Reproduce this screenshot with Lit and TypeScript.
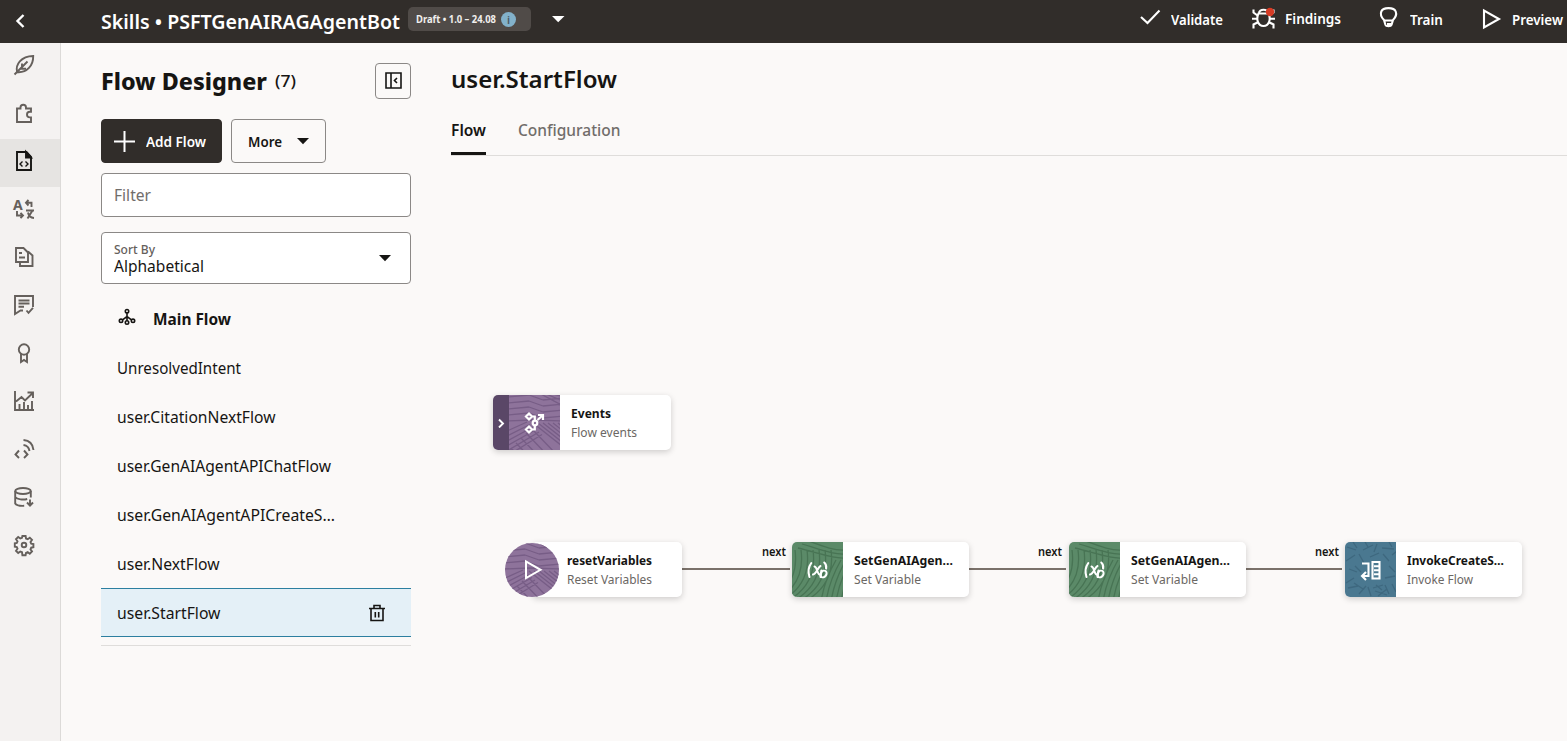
import { LitElement, html, css, svg } from "lit";
import { customElement, property } from "lit/decorators.js";
import { classMap } from "lit/directives/class-map.js";
import { styleMap } from "lit/directives/style-map.js";

/** A single line label whose glyphs are condensed or widened to a given width. */
@customElement("fit-text")
class FitText extends LitElement {
  @property({ type: Number }) w = 0;
  @property() text = "";

  static styles = css`
    :host { display: block; flex: none; white-space: nowrap; }
    .inner { display: inline-block; transform-origin: 0 50%; vertical-align: top; }
  `;

  updated() {
    const el = this.renderRoot.querySelector(".inner") as HTMLElement;
    this.style.width = this.w + "px";
    el.style.transform = "none";
    const natural = el.getBoundingClientRect().width;
    if (natural) el.style.transform = `scaleX(${this.w / natural})`;
  }

  render() {
    return html`<span class="inner">${this.text}</span>`;
  }
}

const t = (text: string, w: number, cls = "") =>
  html`<fit-text class=${cls} .text=${text} .w=${w}></fit-text>`;

/* Side navigation icons, drawn on a 20 x 20 grid */
const navIcons = [
  svg`<path d="M3.2 17.2C1 10 7 1.2 19.2 1c.2 9.5-6.2 17-16 16.2z"/><path d="M.5 19.5 13.5 6.5M8 12V8.5M6.5 13.8h5.5"/>`,
  svg`<path d="M3 5.5h3.5V4.500a2.500 2.500 0 0 1 5.500 0v1H17v3.300h-1.200a2.800 2.800 0 0 0 0 5.600H17V19H3z"/>`,
  svg`<path d="M3 1h9.500L17 5.800V19H3z"/><path d="M12 1v5.500h5z" fill="currentColor"/><path stroke-width="1.400" d="M8.500 10.500 6 13l2.500 2.500M11.500 10.500 14 13l-2.500 2.500"/>`,
  svg`<text x="-1" y="11" class="ch">A</text><path d="M14.500 1 12 3.800l2.500 2.700M12 3.800h5.500v4.200M3 12v4.500h5.500M6.500 13.800l2.500 2.700-2.500 2.700M12 11.500h8M13.500 19.500l5-8M14 13.500c.5 3 3 5.300 6 5.500"/>`,
  svg`<path d="M2 1h7.500l4.500 4.500V15H2zM5 6h3M5 10.500h6M6 15v4h12.500V8.500l-4.500-4"/>`,
  svg`<path d="M9 15.500H6.500L1 19V1h18v11M4.500 5.500h11M4.500 8.500h11M4.500 11.700h5.500M12.500 15.500l2 2.300 4.500-5"/>`,
  svg`<circle cx="10" cy="6.500" r="5.200"/><path d="M7 11v8l3-2 3 2v-8"/>`,
  svg`<path d="M1 0v19h19M5.500 19v-6M10 19v-8M14 19v-5M18 19v-9M2 10.500l5.500-4.500 3.500 3.500 7.500-7.200M13.500 1.500H19V7"/>`,
  svg`<path d="M5 11.500 1.500 15.500 5 19M10 11.500l3.500 4L10 19M9.500 6c3.500.5 5.500 2.500 6 6M9.500 1c6 .5 9.500 4.500 10 10"/>`,
  svg`<ellipse cx="9" cy="4" rx="7.800" ry="3"/><path d="M1.200 4v12.500c1 1.800 4.500 2.500 9 2.300M16.800 4v6.500M1.200 10.200c2 2.300 8 2.900 12 1.800M16 12.500v6M13 15.500l3 3.200 3-3.200"/>`,
  svg`<circle cx="10" cy="10" r="2.300"/><path d="M8.400 1h3.200l.4 2.500 1.700.7 2.100-1.500 2.200 2.200-1.500 2.100.7 1.700 2.200.4v3.200l-2.200.4-.7 1.700 1.500 2.100-2.200 2.200-2.100-1.500-1.700.7-.4 2.300H8.400L8 17.200l-1.700-.7L4.200 18 2 15.800l1.500-2.100-.7-1.700L.8 11.600V8.400L2.800 8l.7-1.700L2 4.200 4.200 2l2.100 1.500L8 2.800z"/>`,
];

const line = (x1: number, y1: number, x2: number, y2: number) => `M${x1} ${y1}L${x2} ${y2}`;

/* Bands of parallel strokes filling the purple tile */
const purpleTexture = [
  ...[-14, -8, -2, 4].map((o) => line(-2, 16 + o, 20, 14 + o) + line(20, 14 + o, 34, 19 + o) + line(34, 19 + o, 56, 17 + o)),
  line(-2, 26, 24, 25) + line(24, 25, 56, 26),
  ...[0, 5, 10, 15, 20, 25].map((o) => line(-2, 36 + o, 18 + o * 0.6, 27 + o * 0.5)),
  ...[0, 5, 10, 15, 20, 25, 30].map((o) => line(24 + o, 28, 62 + o, 58)),
  ...[0, 5, 10, 15, 20].map((o) => line(22 - o, 33 + o, 50 - o, 62 + o)),
  ...[0, 5, 10].map((o) => line(30 + o, -2, 56, 12 - o)),
].join("");

/* Sweeping curves of the green tile */
const greenTexture = [
  ...[-36, -30, -24, -18, -12, -6, 0, 6, 12].map((o) => `M${o} 60C${o + 22} 48 ${o + 30} 30 ${o + 27} 8`),
  ...[0, 4, 8].map((o) => `M${14 - o} ${-2 + o}C30 ${4 + o} 42 ${9 + o} 56 ${8 + o}`),
  ...[0, 5, 10, 15, 20].map((o) => `M${29 + o} 60C${31 + o} 46 ${36 + o} 32 ${44 + o} 18`),
].join("");

/* Scattered dashes of the blue tile */
const blueTexture = "M2 5l9 3M8 0l4 6M18 8l10-5M32 2l-3 8M37 6l12 1M44 0l3 5M1 19l9-6M14 12l5 9M25 15l9-4M38 12l6 7M47 13l5-4M4 27l8 3M9 36l-8 5M16 30l-6-6M3 46l10-2M14 52l7-8M9 41l9 6M26 54l-3-9M28 46l10-3M33 54l9-7M44 52l-4-9M40 36l10-2M47 42l4 8M44 24l6 6M37 48l-6-5M20 0l3 5M30 49l12 4";

@customElement("flow-node")
class FlowNode extends LitElement {
  @property() kind = "set";
  @property() name = "";
  @property() type = "";
  @property({ type: Number }) nw = 98;
  @property({ type: Number }) tw = 66;

  static styles = css`
    :host { display: flex; height: 55px; border-radius: 5px; background: #fff; box-shadow: 0 2px 6px rgba(0, 0, 0, .18); }
    .handle { width: 16px; background: #5a4767; border-radius: 5px 0 0 5px; display: grid; place-items: center; flex: none; }
    .tile { width: 51px; height: 55px; flex: none; overflow: hidden; border-radius: 5px 0 0 5px; }
    .events .tile { border-radius: 0; }
    .reset .tile { width: 54px; height: 54px; margin: 1px 0 0 -27px; border-radius: 50%; }
    .wrap { display: flex; flex: 1; }
    svg { display: block; }
    .labels { padding: 9px 0 0 11px; }
    .reset .labels { padding-left: 7.5px; }
    .name { font-size: 12.5px; font-weight: 700; line-height: 19px; color: #161513; }
    .type { font-size: 12px; line-height: 19px; color: #6b6764; }
  `;

  private glyph() {
    switch (this.kind) {
      case "events":
        return svg`<g fill="none" stroke="#fff" stroke-width="2.200"><path d="M20 18.500l3 3-3 3-3-3zM20 31.500l3 3-3 3-3-3zM23 21.500h2.800v4.500M23 34.500h2.800v-4.500"/><circle cx="26" cy="28" r="2.300"/><path d="M28.500 25l5-4.500M29 20h5v5"/></g>`;
      case "reset":
        return svg`<path d="M21 18.500v16.500l14.500-8.200z" fill="none" stroke="#fff" stroke-width="2"/>`;
      case "invoke":
        return svg`<g fill="none" stroke="#fff" stroke-width="2.100"><path d="M17 21.500h6.500V34h-5.500M21 30l-4 4 4 4"/><path d="M27.500 20h7v16.500h-7zM29 24.200h4.500M29 28.200h4.500M29 32.200h4.500"/></g>`;
      default:
        return svg`<g fill="none" stroke="#fff" stroke-linecap="round"><path stroke-width="2.100" d="M19.300 21c-3.300 4.500-3.300 9.500-1.800 14M32.300 20.500c1.700 1.500 2.200 3.500 1.800 6"/><path stroke-width="2" d="M22.500 24.500c3 .5 2.500 7.500 5 8M28.500 24c-2.500 1-4 8-7.500 8.500"/><ellipse cx="31.500" cy="32" rx="2.800" ry="3.600" transform="rotate(35 31.500 32)" stroke-width="2"/><path stroke-width="2" d="M29.500 28.500l-1 6.500"/></g>`;
    }
  }

  render() {
    const [bg, ink, tex] =
      this.kind === "set" ? ["#5b8a68", "#487454", greenTexture]
      : this.kind === "invoke" ? ["#4a7890", "#3e687f", blueTexture]
      : ["#8e739b", "#775d86", purpleTexture];
    const w = this.kind === "reset" ? 54 : 51;
    return html`<div class="wrap ${this.kind}">
      ${this.kind === "events"
        ? html`<div class="handle"><svg width="8" height="10" fill="none" stroke="#fff" stroke-width="1.900"><path d="M2 1.500l4 4-4 4"/></svg></div>`
        : ""}
      <div class="tile"><svg width=${w} height="55">
        <rect width=${w} height="55" fill=${bg}></rect>
        <path d=${tex} fill="none" stroke=${ink} stroke-width="1.300"></path>
        ${this.glyph()}
      </svg></div>
      <div class="labels">${t(this.name, this.nw, "name")}${t(this.type, this.tw, "type")}</div>
    </div>`;
  }
}

const flows: [string, number][] = [
  ["UnresolvedIntent", 124], ["user.CitationNextFlow", 158.5], ["user.GenAIAgentAPIChatFlow", 214],
  ["user.GenAIAgentAPICreateS…", 218], ["user.NextFlow", 102.5], ["user.StartFlow", 103.5],
];

const nodes = [
  { kind: "events", name: "Events", type: "Flow events", x: 493, y: 395, w: 178, nw: 40, tw: 66 },
  { kind: "reset", name: "resetVariables", type: "Reset Variables", x: 532, y: 542, w: 150, nw: 85, tw: 85 },
  { kind: "set", name: "SetGenAIAgen…", type: "Set Variable", x: 792, y: 542, w: 177, nw: 99, tw: 67 },
  { kind: "set", name: "SetGenAIAgen…", type: "Set Variable", x: 1068.5, y: 542, w: 177, nw: 99, tw: 67 },
  { kind: "invoke", name: "InvokeCreateS…", type: "Invoke Flow", x: 1345, y: 542, w: 177, nw: 97, tw: 66 },
];

const links = [{ x: 682, w: 108, label: 762 }, { x: 969, w: 97, label: 1038 }, { x: 1246, w: 96, label: 1314.5 }];

@customElement("app-root")
class AppRoot extends LitElement {
  static styles = css`
    :host { display: block; height: 741px; overflow: hidden; font-family: "Noto Sans", "Open Sans", sans-serif; color: #161513; background: #fbf9f8; }
    * { box-sizing: border-box; }
    svg { display: block; flex: none; fill: none; stroke: currentColor; stroke-width: 1.8; overflow: visible; }
    .page { display: grid; grid-template: 43px 698px / 61px 350px 1fr; height: 741px; width: 1567px; }
    .top { grid-column: 1 / -1; background: #312d2a; color: #fff; display: flex; overflow: hidden; }
    .back { width: 101px; padding: 14px 0 0 15px; }
    .title { font-size: 20.5px; font-weight: 600; line-height: 43px; }
    .pill { margin: 7px 0 0 8px; width: 123px; height: 24px; border-radius: 5px; background: #504b48; display: flex; padding-left: 8px; }
    .ver { font-size: 11px; font-weight: 700; line-height: 24px; color: #f1efed; }
    .info { margin: 4.5px 0 0 5px; width: 15px; height: 15px; border-radius: 50%; background: #82b1ca; color: #4a5a64; font-size: 11px; font-weight: 600; line-height: 15px; text-align: center; }
    .caret { stroke: none; fill: currentColor; }
    .topcaret { margin: 16px 0 0 21px; }
    .actions { margin-left: auto; display: flex; }
    .act { display: flex; }
    .act .lbl { font-size: 14px; font-weight: 600; line-height: 40px; }
    .act .lbl.up { line-height: 38px; }
    .a1 { width: 112px; } .a2 { width: 127px; } .a3 { width: 102px; } .a4 { width: 86px; }
    .act svg { stroke-width: 2.1; }
    .nav { background: #f4f2f1; border-right: 1px solid #dcdad8; color: #65605c; }
    .item { height: 48px; padding: 12px 0 0 14px; }
    .item.on { background: #e6e4e2; color: #161513; }
    .item svg { stroke-width: 1.9; }
    .ch { font: 700 14px "Noto Sans", sans-serif; fill: currentColor; stroke: none; }
    .panel { padding: 20px 0 0 40px; }
    .head { display: flex; height: 36px; }
    .h1 { font-size: 23.5px; font-weight: 800; line-height: 37px; }
    .count { font-size: 16px; font-weight: 500; line-height: 37px; margin-left: 8px; }
    .fold { margin-left: auto; width: 36px; height: 36px; border: 1px solid #8b8886; border-radius: 4px; padding: 8px 0 0 8.5px; }
    .fold svg { stroke-width: 1.6; }
    .btns { display: flex; gap: 9px; margin-top: 20px; }
    .btn { height: 44px; border-radius: 4px; display: flex; font-size: 14px; font-weight: 600; line-height: 43px; border: 1px solid #8b8886; }
    .add { width: 121px; background: #312d2a; border-color: #312d2a; color: #fff; padding-left: 12px; gap: 11px; }
    .add svg { margin-top: 10.5px; stroke-width: 2; }
    .more { width: 95px; padding-left: 16px; gap: 15px; }
    .more svg { margin-top: 18px; }
    .field { width: 310px; border: 1px solid #8b8886; border-radius: 4px; background: #fff; padding-left: 12px; font-size: 16px; }
    .filter { height: 44px; margin-top: 10px; line-height: 42px; color: #716d6a; }
    .sort { height: 52px; margin-top: 15px; padding-top: 8px; display: flex; }
    .small { font-size: 12px; line-height: 17px; color: #65605c; font-weight: 500; }
    .val { line-height: 17px; }
    .sort svg { margin: 14px 19px 0 auto; }
    .list { width: 310px; margin-top: 10px; padding-bottom: 8px; border-bottom: 1px solid #dfdddb; }
    .row { height: 49px; padding: 1px 26px 0 16px; display: flex; align-items: center; font-size: 16px; line-height: 49px; }
    .row fit-text { position: relative; top: .5px; }
    .row.main { font-weight: 700; gap: 17px; }
    .row.main svg { margin-top: -4px; }
    .row.sel { background: #e4f0f7; border: 1px solid #2c7fa0; border-width: 1px 0; line-height: 47px; }
    .row.sel svg { margin-left: auto; stroke-width: 1.6; }
    .work { padding-left: 40px; }
    .h2 { font-size: 24px; font-weight: 650; line-height: 36px; padding-top: 18px; }
    .tabs { display: flex; gap: 32px; height: 40px; margin-top: 19px; border-bottom: 1px solid #dfdddb; font-size: 16px; font-weight: 600; }
    .tab { height: 39px; line-height: 28px; color: #716d6a; font-weight: 500; }
    .tab.on { border-bottom: 3px solid #161513; color: #161513; font-weight: 600; }
    .node, .link, .next { position: absolute; }
    .link { height: 2px; top: 568px; background: #7a716a; }
    .next { top: 542px; font-size: 12px; font-weight: 600; line-height: 20px; }
  `;

  render() {
    return html`<div class="page">
      <header class="top">
        <div class="back"><svg width="10" height="14"><path stroke-width="2.400" d="M8.500 1 2.500 7l6 6"/></svg></div>
        ${t("Skills • PSFTGenAIRAGAgentBot", 299, "title")}
        <div class="pill">${t("Draft • 1.0 – 24.08", 80, "ver")}<span class="info">i</span></div>
        <svg class="caret topcaret" width="13" height="7"><path d="M0 0h12.500L6.200 6.300z"/></svg>
        <div class="actions">
          <div class="act a1"><svg width="31" height="40"><path d="M1 17l6.500 6L19.500 10.500"/></svg>${t("Validate", 52, "lbl")}</div>
          <div class="act a2"><svg width="33" height="40"><path d="M6.500 13.500h10c2.500 5 1 12.500-5 12.500S4 18.500 6.500 13.500zM7 13.500c0-5 9-5 9 0M1.500 9.500v3l4 3M1.500 28.500v-4l4-2M0 18.700h5M21.500 28.500v-4l-4-2M18 18.700h5M21.500 9.500v3l-4 3"/><circle cx="18" cy="12" r="4.200" fill="#d63b25" stroke="none"/></svg>${t("Findings", 56, "lbl up")}</div>
          <div class="act a3"><svg width="31" height="40"><path d="M5 20C2 17 1.300 14 2.300 11.500 4 7 15 7 16.700 11.500c1 2.500.3 5.500-2.700 8.500L12.500 25c-.5 1.500-5.500 1.500-6 0zM5 20.500h9M8 24h4"/></svg>${t("Train", 33, "lbl")}</div>
          <div class="act a4"><svg width="31" height="40"><path d="M3 10.500v17l15-8.500z"/></svg>${t("Preview", 51, "lbl")}</div>
        </div>
      </header>
      <nav class="nav">
        ${navIcons.map((ic, i) => html`<div class=${classMap({ item: true, on: i === 2 })}><svg width="20" height="20">${ic}</svg></div>`)}
      </nav>
      <aside class="panel">
        <div class="head">
          ${t("Flow Designer", 166, "h1")}${t("(7)", 21, "count")}
          <div class="fold"><svg width="17" height="17"><path d="M1 1h15v15H1zM6 1v15M12 6l-2.500 2.500L12 11"/></svg></div>
        </div>
        <div class="btns">
          <div class="btn add"><svg width="21" height="21"><path d="M0 10.500h21M10.500 0v21"/></svg>${t("Add Flow", 60)}</div>
          <div class="btn more">${t("More", 34)}<svg class="caret" width="13" height="7"><path d="M0 0h12L6 6.200z"/></svg></div>
        </div>
        <div class="field filter">${t("Filter", 37)}</div>
        <div class="field sort"><div>${t("Sort By", 41, "small")}${t("Alphabetical", 90, "val")}</div>
          <svg class="caret" width="12" height="7"><path d="M0 0h12L6 6.200z"/></svg></div>
        <div class="list">
          <div class="row main"><svg width="19" height="18"><g stroke-width="1.600"><circle cx="10" cy="3.200" r="1.700"/><circle cx="4" cy="12.800" r="1.700"/><circle cx="10" cy="14.500" r="1.700"/><circle cx="16" cy="12.800" r="1.700"/><path d="M10 5v7.800M5.500 11.800 10 8.500l4.500 3.300"/></g></svg>${t("Main Flow", 78)}</div>
          ${flows.map(([name, w], i) => html`<div class=${classMap({ row: true, sel: i === 5 })}>${t(name, w)}
            ${i === 5 ? html`<svg width="16" height="18"><path d="M0 4.500h16M5 4.500V1.500h6v3M2 4.500V16.500h12V4.500M6.300 8v5.500M9.700 8v5.500"/></svg>` : ""}</div>`)}
        </div>
      </aside>
      <main class="work">
        ${t("user.StartFlow", 166, "h2")}
        <div class="tabs"><div class="tab on">${t("Flow", 35)}</div><div class="tab">${t("Configuration", 102.5)}</div></div>
        ${links.map((l) => html`
          <div class="link" style=${styleMap({ left: l.x + "px", width: l.w + "px" })}></div>
          <div class="next" style=${styleMap({ left: l.label + "px" })}>${t("next", 24)}</div>`)}
        ${nodes.map((n) => html`<flow-node class="node" style=${styleMap({ left: n.x + "px", top: n.y + "px", width: n.w + "px" })}
          .kind=${n.kind} .name=${n.name} .type=${n.type} .nw=${n.nw} .tw=${n.tw}></flow-node>`)}
      </main>
    </div>`;
  }
}
